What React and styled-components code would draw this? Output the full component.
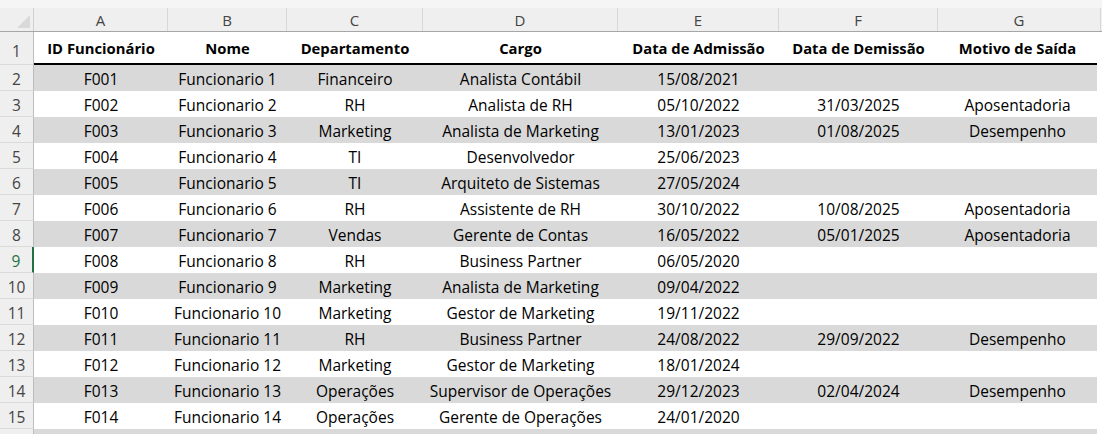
import React from "react";
import styled, { createGlobalStyle } from "styled-components";

const Global = createGlobalStyle`
  html, body { margin: 0; padding: 0; background: #ffffff; }
  body { font-family: "Open Sans", "Liberation Sans", sans-serif; }
`;

const COLS = "34px 134px 119px 136px 195px 161px 159px 163px";

const Sheet = styled.div`
  width: 1102px;
  height: 434px;
  overflow: hidden;
  background: #ffffff;
`;

const TopStrip = styled.div`
  height: 8px;
  background: #f5f5f5;
`;

const Grid = styled.div`
  display: grid;
  grid-template-columns: ${COLS};
`;

const HeaderRow = styled(Grid)`
  height: 23px;
  background: #efefef;
  border-bottom: 1px solid #a6a6a6;
  box-sizing: content-box;
`;

const Corner = styled.div`
  position: relative;
  border-right: 1px solid #cfcfcf;
  box-sizing: border-box;
  &::after {
    content: "";
    position: absolute;
    right: 3px;
    bottom: 3px;
    width: 0;
    height: 0;
    border-left: 13px solid transparent;
    border-bottom: 13px solid #d9d9d9;
  }
`;

const ColLetter = styled.div`
  display: flex;
  align-items: center;
  justify-content: center;
  font-size: 15px;
  color: #444444;
  border-right: 1px solid #d8d8d8;
  box-sizing: border-box;
`;

const Row = styled(Grid)`
  height: ${(p) => p.$h}px;
`;

const RowNum = styled.div`
  display: flex;
  align-items: center;
  justify-content: center;
  padding-top: ${(p) => (p.$tall ? 6 : 2)}px;
  box-sizing: border-box;
  font-size: 15.5px;
  color: ${(p) => (p.$active ? "#217346" : "#444444")};
  background: #efefef;
  border-bottom: 1px solid #dadada;
  border-right: ${(p) => (p.$active ? "2px solid #217346" : "1px solid #bdbdbd")};
`;

const Cell = styled.div`
  display: flex;
  align-items: center;
  justify-content: center;
  white-space: nowrap;
  overflow: hidden;
  padding-top: 1px;
  box-sizing: border-box;
  font-size: 15.5px;
  color: #000000;
  background: ${(p) => (p.$band ? "#d9d9d9" : "#ffffff")};
  ${(p) => p.$last && "margin-right: 4px;"}
`;

const HeadCell = styled(Cell)`
  font-weight: 700;
  font-size: 14.8px;
  padding-top: 0;
  border-bottom: 2px solid #000000;
`;

const headers = [
  "ID Funcionário",
  "Nome",
  "Departamento",
  "Cargo",
  "Data de Admissão",
  "Data de Demissão",
  "Motivo de Saída",
];

const data = [
  ["F001", "Funcionario 1", "Financeiro", "Analista Contábil", "15/08/2021", "", ""],
  ["F002", "Funcionario 2", "RH", "Analista de RH", "05/10/2022", "31/03/2025", "Aposentadoria"],
  ["F003", "Funcionario 3", "Marketing", "Analista de Marketing", "13/01/2023", "01/08/2025", "Desempenho"],
  ["F004", "Funcionario 4", "TI", "Desenvolvedor", "25/06/2023", "", ""],
  ["F005", "Funcionario 5", "TI", "Arquiteto de Sistemas", "27/05/2024", "", ""],
  ["F006", "Funcionario 6", "RH", "Assistente de RH", "30/10/2022", "10/08/2025", "Aposentadoria"],
  ["F007", "Funcionario 7", "Vendas", "Gerente de Contas", "16/05/2022", "05/01/2025", "Aposentadoria"],
  ["F008", "Funcionario 8", "RH", "Business Partner", "06/05/2020", "", ""],
  ["F009", "Funcionario 9", "Marketing", "Analista de Marketing", "09/04/2022", "", ""],
  ["F010", "Funcionario 10", "Marketing", "Gestor de Marketing", "19/11/2022", "", ""],
  ["F011", "Funcionario 11", "RH", "Business Partner", "24/08/2022", "29/09/2022", "Desempenho"],
  ["F012", "Funcionario 12", "Marketing", "Gestor de Marketing", "18/01/2024", "", ""],
  ["F013", "Funcionario 13", "Operações", "Supervisor de Operações", "29/12/2023", "02/04/2024", "Desempenho"],
  ["F014", "Funcionario 14", "Operações", "Gerente de Operações", "24/01/2020", "", ""],
  ["", "", "", "", "", "", ""],
];

export default function App() {
  return (
    <Sheet>
      <Global />
      <TopStrip />
      <HeaderRow>
        <Corner />
        {["A", "B", "C", "D", "E", "F", "G"].map((l) => (
          <ColLetter key={l}>{l}</ColLetter>
        ))}
      </HeaderRow>
      <Row $h={33}>
        <RowNum $tall>1</RowNum>
        {headers.map((h, i) => (
          <HeadCell key={h} $last={i === 6}>
            {h}
          </HeadCell>
        ))}
      </Row>
      {data.map((r, idx) => {
        const n = idx + 2;
        const band = n % 2 === 0;
        return (
          <Row key={n} $h={26}>
            <RowNum $active={n === 9}>{n <= 15 ? n : ""}</RowNum>
            {r.map((v, i) => (
              <Cell key={i} $band={band} $last={i === 6}>
                {v}
              </Cell>
            ))}
          </Row>
        );
      })}
    </Sheet>
  );
}
